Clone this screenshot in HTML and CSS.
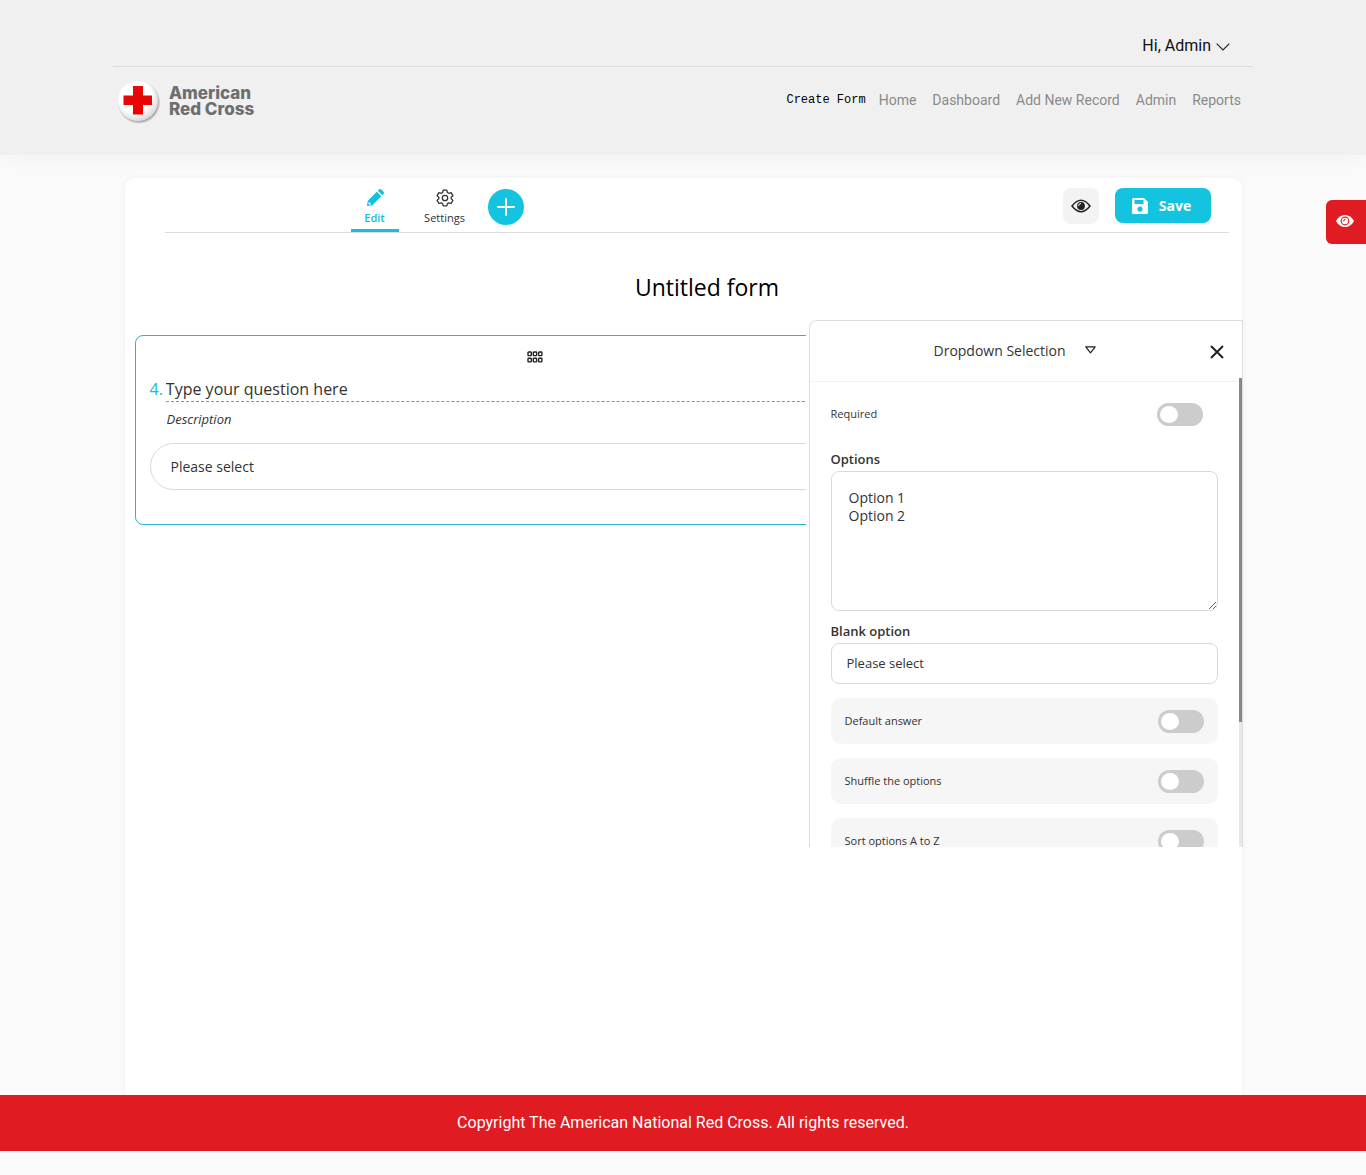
FILE: index.html
```html
<!DOCTYPE html>
<html lang="en">
<head>
<meta charset="utf-8">
<meta name="viewport" content="width=device-width, initial-scale=1">
<title>Create Form - American Red Cross</title>
<link rel="stylesheet" href="styles.css">
</head>
<body>
<header class="site-header">
  <div class="container">
    <div class="user-bar">
      <button class="user-menu" type="button">Hi, Admin
        <svg width="14" height="8" viewBox="0 0 14 8" fill="none" stroke="#222" stroke-width="1.2"><path d="M.7.7 7 7 13.3.7"/></svg>
      </button>
    </div>
    <div class="nav-bar">
      <a class="brand" href="#">
        <svg width="46" height="46" viewBox="0 0 46 46">
          <defs>
            <radialGradient id="disc" cx=".42" cy=".38" r=".62"><stop offset=".65" stop-color="#fff"/><stop offset="1" stop-color="#dcdcdc"/></radialGradient>
            <radialGradient id="shade"><stop offset=".82" stop-color="#888"/><stop offset="1" stop-color="#888" stop-opacity="0"/></radialGradient>
            <linearGradient id="cross" x2="0" y2="1"><stop stop-color="#e30b0b"/><stop offset="1" stop-color="#ee0000"/></linearGradient>
          </defs>
          <circle cx="23" cy="23.500" r="21.500" fill="url(#shade)"/>
          <circle cx="22" cy="22" r="20" fill="url(#disc)"/>
          <path d="M17 7h10v9.500h9V26h-9v9.500H17V26H7.500v-9.500H17z" fill="url(#cross)"/>
        </svg>
        <span class="brand-name">American<br>Red Cross</span>
      </a>
      <nav class="main-nav">
        <a class="nav-current" href="#">Create Form</a>
        <a href="#">Home</a>
        <a href="#">Dashboard</a>
        <a href="#">Add New Record</a>
        <a href="#">Admin</a>
        <a href="#">Reports</a>
      </nav>
    </div>
  </div>
</header>

<main class="builder">
  <div class="toolbar">
    <div class="tabs">
      <button class="tab tab-active" type="button">
        <svg width="18" height="18" viewBox="0 0 18 18" fill="#13bfdc"><path d="M10.800 2.700 15.300 7.200 6.300 16.200 1 17 1.800 11.700zM11.800 1.700 13.100.5a1.600 1.600 0 0 1 2.200 0l2.200 2.200a1.600 1.600 0 0 1 0 2.200l-1.200 1.300z"/><path d="m2.800 12.800 2.400 2.400-1.900.500-1-1z" fill="#fff"/></svg>
        Edit
      </button>
      <button class="tab" type="button">
        <svg width="18" height="18" viewBox="0 0 18 18" fill="none" stroke="#333" stroke-width="1.300" stroke-linejoin="round"><path d="M7.200 1.200h3.600l.6 2.300 1.400.8 2.300-.7 1.800 3.100-1.700 1.600v1.500l1.700 1.600-1.800 3.100-2.300-.7-1.400.8-.6 2.200H7.200l-.6-2.200-1.400-.8-2.300.7-1.800-3.100 1.700-1.600V8.300L1.100 6.700l1.800-3.100 2.300.7 1.400-.8z"/><circle cx="9" cy="9" r="2.700"/></svg>
        Settings
      </button>
      <button class="add-button" type="button" aria-label="Add question">
        <svg width="18" height="18" viewBox="0 0 18 18" stroke="#fff" stroke-width="2" stroke-linecap="round"><path d="M9 1v16M1 9h16"/></svg>
      </button>
    </div>
    <div class="actions">
      <button class="preview-button" type="button" aria-label="Preview form">
        <svg width="20" height="14" viewBox="0 0 20 14"><path d="M1 7Q10-4.500 19 7 10 18.500 1 7z" fill="none" stroke="#222" stroke-width="1.500"/><circle cx="10" cy="7" r="3.900" fill="#222"/><path d="M10 4.500A2.400 2.400 0 0 0 7.600 6.900" fill="none" stroke="#fff" stroke-width="1"/></svg>
      </button>
      <button class="save-button" type="button">
        <svg width="16" height="16" viewBox="0 0 16 16"><path d="M1.500 0H12l4 4v10.500a1.500 1.500 0 0 1-1.500 1.500h-13A1.500 1.500 0 0 1 0 14.500v-13A1.500 1.500 0 0 1 1.500 0zM2.500 2v4h9V2zM8 8.500a2.600 2.600 0 1 0 .01 0z" fill="#fff" fill-rule="evenodd"/></svg>
        Save
      </button>
    </div>
  </div>

  <h1 class="form-title">Untitled form</h1>

  <div class="workspace">
    <section class="canvas">
      <article class="question">
        <svg class="grip" width="16" height="12" viewBox="0 0 16 12" fill="none" stroke="#222" stroke-width="1.400"><rect x="1" y="1" width="3.300" height="3.600" rx=".6"/><rect x="6.300" y="1" width="3.300" height="3.600" rx=".6"/><rect x="11.600" y="1" width="3.300" height="3.600" rx=".6"/><rect x="1" y="7.300" width="3.300" height="3.600" rx=".6"/><rect x="6.300" y="7.300" width="3.300" height="3.600" rx=".6"/><rect x="11.600" y="7.300" width="3.300" height="3.600" rx=".6"/></svg>
        <div class="question-row">
          <label class="question-number" for="question">4.</label>
          <input class="question-text" id="question" type="text" value="Type your question here">
        </div>
        <input class="question-description" type="text" value="Description" aria-label="Description">
        <select class="answer-select" aria-label="Answer"><option>Please select</option></select>
      </article>
    </section>

    <aside class="panel">
      <div class="panel-header">
        <div class="type-picker">
          <select class="type-select" aria-label="Question type"><option>Dropdown Selection</option></select>
          <svg width="11" height="8" viewBox="0 0 11 8" fill="none" stroke="#222" stroke-width="1.200" stroke-linejoin="round"><path d="M.8.800h9.400L5.500 6.800z"/></svg>
        </div>
        <button class="close-button" type="button" aria-label="Close">
          <svg width="14" height="14" viewBox="0 0 14 14" stroke="#222" stroke-width="2"><path d="m1 1 12 12M13 1 1 13"/></svg>
        </button>
      </div>
      <div class="panel-body">
        <label class="required-row"><span class="switch-text">Required</span> <input class="switch" type="checkbox"></label>
        <label class="field-label" for="options">Options</label>
        <textarea class="options-box" id="options">Option 1
Option 2</textarea>
        <label class="field-label" for="blank">Blank option</label>
        <input class="text-box" id="blank" type="text" value="Please select">
        <div class="setting-list">
          <label class="setting"><span class="switch-text">Default answer</span> <input class="switch" type="checkbox"></label>
          <label class="setting"><span class="switch-text">Shuffle the options</span> <input class="switch" type="checkbox"></label>
          <label class="setting"><span class="switch-text">Sort options A to Z</span> <input class="switch" type="checkbox"></label>
        </div>
      </div>
      <div class="scroll-track"><div class="scroll-thumb"></div></div>
    </aside>
  </div>
</main>

<button class="side-preview" type="button" aria-label="Show preview">
  <svg width="18" height="12" viewBox="0 0 18 12"><path d="M0 6C4-2 14-2 18 6 14 14 4 14 0 6z" fill="#fff"/><circle cx="9" cy="6" r="3.800" fill="none" stroke="#e11b22" stroke-width="1.200"/><path d="M9 3.800Q9 6 6.800 6" fill="none" stroke="#e11b22" stroke-width="1"/></svg>
</button>

<footer class="site-footer">Copyright The American National Red Cross. All rights reserved.</footer>
</body>
</html>
```
FILE: styles.css
```css
* { box-sizing: border-box; }

body {
  margin: 0;
  min-height: 100vh;
  display: flex;
  flex-direction: column;
  background: #fafafa;
  color: #333;
  font-family: "Open Sans", sans-serif;
}

button, input, select, textarea {
  font: inherit;
  color: inherit;
  margin: 0;
  padding: 0;
  border: 0;
  background: none;
}
button { cursor: pointer; }
select { appearance: none; }
a { text-decoration: none; }
svg { flex: none; }

/* Header */
.site-header {
  background: #f0f0f0;
  padding: 24px 24px 28px;
  box-shadow: 0 2px 20px rgba(0, 0, 0, .04);
  font-family: Roboto, sans-serif;
}
.container { max-width: 1140px; margin: 0 auto; }
.user-bar {
  display: flex;
  justify-content: flex-end;
  height: 43px;
  padding-right: 23px;
  border-bottom: 1px solid #dcdcdc;
}
.user-menu {
  display: flex;
  align-items: center;
  gap: 5px;
  font-size: 16px;
  color: #111;
}
.user-menu svg { margin-top: 4px; }
.nav-bar {
  display: flex;
  justify-content: space-between;
  height: 60px;
  padding: 12px 12px 0 3px;
}
.brand { display: flex; gap: 7px; }
.brand-name {
  font: 800 17px/16px Inter, sans-serif;
  color: #6d6e70;
  padding-top: 6px;
}
.main-nav {
  display: flex;
  align-items: center;
  gap: 16px;
  height: 42px;
  font-size: 14px;
}
.main-nav a { color: #8a8a8a; }
.main-nav .nav-current {
  font: 12px "Liberation Mono", monospace;
  color: #000;
  margin-right: -3px;
}

/* Builder card */
.builder {
  flex: 1;
  width: calc(100% - 48px);
  max-width: 1117px;
  margin: 23px auto 0;
  background: #fff;
  border-radius: 10px 10px 0 0;
  box-shadow: 0 0 6px rgba(0, 0, 0, .04);
}
.toolbar {
  display: flex;
  justify-content: space-between;
  height: 55px;
  margin: 0 13px 0 40px;
  border-bottom: 1px solid #ddd;
}
.tabs { display: flex; padding-left: 186px; }
.tab {
  display: flex;
  flex-direction: column;
  align-items: center;
  gap: 3px;
  min-width: 48px;
  padding: 11px 0 0;
  margin-right: 22px;
  border-bottom: 3px solid transparent;
  font-size: 11px;
  line-height: 16px;
}
.tab-active {
  color: #13bfdc;
  font-weight: 600;
  border-color: #13bfdc;
}
.add-button {
  display: grid;
  place-items: center;
  width: 36px;
  height: 36px;
  margin: 11px 0 0 -3px;
  border-radius: 50%;
  background: #13c3e0;
}
.actions {
  display: flex;
  gap: 16px;
  padding: 10px 18px 0 0;
}
.preview-button {
  display: grid;
  place-items: center;
  width: 36px;
  height: 36px;
  border-radius: 8px;
  background: #f3f3f3;
}
.save-button {
  display: flex;
  align-items: center;
  justify-content: center;
  gap: 11px;
  width: 96px;
  height: 35px;
  padding-right: 2px;
  border-radius: 8px;
  background: #13c3e0;
  color: #fff;
  font-size: 14px;
  font-weight: 700;
}
.form-title {
  margin: 37px 0 0;
  padding-left: 48px;
  text-align: center;
  font-size: 23px;
  line-height: 34px;
  font-weight: 500;
  color: #000;
}

.workspace {
  display: flex;
  gap: 3px;
  margin: 16px -1px 0 10px;
}

/* Question */
.canvas {
  flex: 1;
  min-width: 0;
  padding-top: 15px;
  overflow: hidden;
}
.question {
  display: flex;
  flex-direction: column;
  width: 800px;
  height: 190px;
  padding: 15px 14px 0;
  border: 1px solid #2fb3cb;
  border-radius: 8px;
}
.grip { align-self: center; }
.question-row {
  display: flex;
  align-items: center;
  gap: 3px;
  margin-top: 13px;
  font-size: 16px;
}
.question-number { color: #13bfdc; }
.question-text {
  flex: 1;
  height: 26px;
  border-bottom: 1px dashed #2fb3cb;
}
.question-description {
  height: 20px;
  margin: 7px 0 0 17px;
  font-size: 13px;
  font-style: italic;
}
.answer-select {
  height: 47px;
  margin-top: 14px;
  padding-left: 20px;
  border: 1px solid #d9d9d9;
  border-radius: 24px;
  font-size: 14px;
}

/* Settings panel */
.panel {
  position: relative;
  flex: none;
  width: 434px;
  height: 527px;
  overflow: hidden;
  background: #fff;
  border: 1px solid #ddd;
  border-bottom: 0;
  border-radius: 8px 0 0 0;
}
.panel-header {
  display: flex;
  align-items: center;
  height: 61px;
  padding: 0 18px;
  border-bottom: 1px solid #f3f3f3;
}
.type-picker {
  flex: 1;
  display: flex;
  align-items: center;
  justify-content: center;
  gap: 18px;
  padding: 0 8px 2px 0;
  font-size: 14px;
}
.close-button { display: grid; padding-top: 2px; }
.panel-body {
  display: flex;
  flex-direction: column;
  padding: 0 24px 0 21px;
}
.required-row {
  display: flex;
  align-items: center;
  justify-content: space-between;
  padding: 21px 15px 23px 0;
}
.switch-text {
  padding-bottom: 2px;
  font-size: 11px;
}
.switch {
  appearance: none;
  flex: none;
  width: 46px;
  height: 23px;
  padding: 3px;
  border-radius: 12px;
  background: #ccc;
}
.switch::before {
  content: "";
  display: block;
  width: 18px;
  height: 17px;
  border-radius: 50%;
  background: #fff;
}
.switch:checked { background: #13c3e0; }
.switch:checked::before { margin-left: auto; }
.field-label {
  font-size: 13px;
  line-height: 20px;
  font-weight: 600;
}
.options-box {
  height: 140px;
  margin: 2px 0 10px;
  padding: 17px;
  border: 1px solid #d9d9d9;
  border-radius: 8px;
  font-size: 14px;
  line-height: 18px;
  resize: vertical;
}
.text-box {
  height: 41px;
  margin-top: 2px;
  padding: 0 15px 2px;
  border: 1px solid #d9d9d9;
  border-radius: 8px;
  font-size: 13px;
}
.setting-list {
  display: grid;
  gap: 14px;
  margin-top: 14px;
}
.setting {
  display: flex;
  align-items: center;
  justify-content: space-between;
  height: 46px;
  padding: 0 14px;
  border-radius: 10px;
  background: #f6f6f6;
}
.scroll-track {
  position: absolute;
  top: 57px;
  right: 0;
  bottom: 0;
  width: 3px;
  background: #e8e8e8;
}
.scroll-thumb {
  height: 344px;
  background: #888;
}

/* Floating preview tab */
.side-preview {
  position: absolute;
  top: 200px;
  right: 0;
  display: grid;
  align-items: center;
  width: 40px;
  height: 44px;
  padding: 0 0 2px 10px;
  border-radius: 6px 0 0 6px;
  background: #e11b22;
}

.site-footer {
  margin-bottom: 24px;
  padding: 16px;
  background: #e11b22;
  color: #fff;
  text-align: center;
  font: 16px/24px Roboto, sans-serif;
}
```
